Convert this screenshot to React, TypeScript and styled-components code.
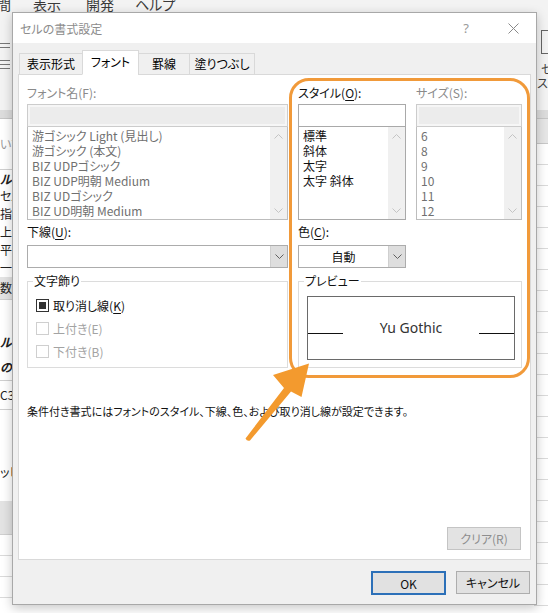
import React from 'react';
import styled, { createGlobalStyle } from 'styled-components';

const FONT = `"Noto Sans CJK JP", "Noto Sans", sans-serif`;

const GlobalStyle = createGlobalStyle`
  html, body { margin: 0; padding: 0; }
  body {
    width: 548px; height: 613px; overflow: hidden; background: #fff;
    font-family: ${FONT};
    font-feature-settings: "palt" 1;
  }
  #root { position: relative; width: 548px; height: 613px; overflow: hidden; }
`;

/* ---------------- Excel window behind ---------------- */
const Backdrop = styled.div`
  position: absolute;
  inset: 0;
  display: flex;
  flex-direction: column;
  background: #fff;
`;
const MenuBar = styled.div`
  height: 12px;
  flex: none;
  background: #f3f3f3;
  overflow: hidden;
  display: flex;
`;
const MenuItem = styled.span<{ $w: number; $shift?: number }>`
  flex: none;
  width: ${p => p.$w}px;
  margin-left: ${p => p.$shift ?? 0}px;
  margin-top: -6px;
  font-size: 14px;
  line-height: 20px;
  color: #3a3a3a;
  white-space: nowrap;
`;
const Ribbon = styled.div`
  height: 98px;
  flex: none;
  background: #f3f3f3;
  display: flex;
  justify-content: space-between;
`;
const RibbonLeft = styled.div`
  display: flex;
  flex-direction: column;
  gap: 12px;
  padding-top: 31px;
`;
const LinesIcon = styled.div`
  width: 10px;
  display: flex;
  flex-direction: column;
  gap: 3px;
  & > i {
    display: block;
    height: 1px;
    background: #777;
  }
`;
const RibbonRight = styled.div`
  width: 10px;
  display: flex;
  flex-direction: column;
  align-items: flex-end;
  padding-top: 18px;
  font-size: 12px;
  line-height: 14px;
  color: #444;
  white-space: nowrap;
`;
const RibbonBox = styled.div`
  width: 6px;
  height: 22px;
  border: 1px solid #666;
  border-right: none;
  margin-bottom: 8px;
`;
const RibbonText = styled.div<{ $ml: number }>`
  align-self: flex-start;
  margin-left: ${p => p.$ml}px;
`;
const HeaderBand = styled.div`
  height: 8px;
  flex: none;
  background: #dcdcdc;
  border-bottom: 1px solid #c6c6c6;
`;
const SheetArea = styled.div`
  flex: 1;
  display: flex;
  justify-content: space-between;
`;
const SidePane = styled.div`
  width: 60px;
  display: flex;
  flex-direction: column;
  font-size: 12px;
  color: #222;
  background: #fff;
`;
const PaneRow = styled.div<{ $h: number; $gray?: boolean; $bold?: boolean; $line?: boolean; $faded?: boolean }>`
  height: ${p => p.$h}px;
  line-height: ${p => p.$h}px;
  flex: none;
  white-space: nowrap;
  background: ${p => (p.$gray ? '#e3e3e3' : 'transparent')};
  font-weight: ${p => (p.$bold ? 700 : 400)};
  font-style: ${p => (p.$bold ? 'italic' : 'normal')};
  color: ${p => (p.$faded ? '#9a9a9a' : '#222')};
  border-bottom: ${p => (p.$line ? '1px solid #cfcfcf' : 'none')};
`;
const PaneGrid = styled.div`
  flex: 1;
  background: repeating-linear-gradient(to bottom, #fff 0, #fff 20px, #dadada 20px, #dadada 21px);
`;
const RightGrid = styled.div`
  width: 14px;
  display: flex;
  flex-direction: column;
`;
const ColHeader = styled.div`
  height: 24px;
  flex: none;
  background: #e6e6e6;
  border-bottom: 1px solid #c8c8c8;
`;
const GridRows = styled.div`
  flex: 1;
  background: repeating-linear-gradient(to bottom, #fff 0, #fff 20px, #dadada 20px, #dadada 21px);
`;

/* ---------------- Dialog ---------------- */
const Dialog = styled.div`
  position: absolute;
  left: 12px;
  top: 12px;
  width: 525px;
  height: 593px;
  box-sizing: border-box;
  background: #f0f0f0;
  border: 1px solid #a8a8a8;
  box-shadow: 0 3px 10px rgba(0, 0, 0, 0.22);
  display: flex;
  flex-direction: column;
  color: #000;
`;
const TitleBar = styled.div`
  height: 30px;
  flex: none;
  background: #fff;
  display: flex;
  align-items: center;
`;
const Title = styled.div`
  flex: 1;
  padding-left: 7px;
  font-size: 12px;
  color: #8c8c8c;
`;
const TitleButton = styled.div<{ $w: number }>`
  width: ${p => p.$w}px;
  height: 30px;
  display: flex;
  align-items: center;
  justify-content: center;
  color: #9a9a9a;
  font-size: 13px;
  font-family: "Noto Sans", sans-serif;
`;
const Body = styled.div`
  flex: 1;
  display: flex;
  flex-direction: column;
  padding: 7px 5px 0 5px;
`;
const TabRow = styled.div`
  display: flex;
  align-items: flex-end;
  height: 25px;
  padding-left: 2px;
  margin-bottom: -1px;
  position: relative;
  z-index: 1;
`;
const Tab = styled.div<{ $w: number; $active?: boolean }>`
  width: ${p => p.$w}px;
  height: ${p => (p.$active ? 25 : 22)}px;
  box-sizing: border-box;
  border: 1px solid #d9d9d9;
  border-bottom: ${p => (p.$active ? '1px solid #fff' : '1px solid #d9d9d9')};
  margin-left: -1px;
  background: ${p => (p.$active ? '#fff' : '#f0f0f0')};
  display: flex;
  align-items: center;
  justify-content: center;
  font-size: 12px;
  line-height: 16px;
  padding-bottom: ${p => (p.$active ? 1 : 0)}px;
`;
const Panel = styled.div`
  height: 486px;
  flex: none;
  box-sizing: border-box;
  background: #fff;
  border: 1px solid #d9d9d9;
  padding: 10px 9px 9px 8px;
  display: flex;
  flex-direction: column;
`;
const Grid = styled.div`
  display: grid;
  grid-template-columns: 261px 108px 106px;
  grid-template-rows: 19px 120px 21px 28px 95px;
  column-gap: 10px;
  align-items: start;
`;
const Label = styled.div<{ $dim?: boolean }>`
  font-size: 12px;
  line-height: 16px;
  height: 16px;
  color: ${p => (p.$dim ? '#8a8a8a' : '#111')};
  white-space: nowrap;
  & u { text-decoration-thickness: 1px; text-underline-offset: 2px; }
`;
const FieldStack = styled.div`
  display: flex;
  flex-direction: column;
`;
const InputBox = styled.div<{ $disabled?: boolean }>`
  height: 23px;
  box-sizing: border-box;
  border: 1px solid ${p => (p.$disabled ? '#cccccc' : '#a9a9a9')};
  background: ${p => (p.$disabled ? '#ececec' : '#fff')};
  box-shadow: ${p => (p.$disabled ? 'inset 0 0 0 2px #f6f6f6' : 'none')};
`;
const ListBox = styled.div<{ $disabled?: boolean }>`
  height: 93px;
  box-sizing: border-box;
  border: 1px solid ${p => (p.$disabled ? '#bdbdbd' : '#a9a9a9')};
  border-top: none;
  background: #fff;
  display: flex;
`;
const ListItems = styled.div`
  flex: 1;
  padding: 1px 0 0 4px;
  display: flex;
  flex-direction: column;
  overflow: hidden;
`;
const ListItem = styled.div<{ $dim?: boolean }>`
  height: 15px;
  line-height: 15px;
  font-size: 12px;
  white-space: nowrap;
  color: ${p => (p.$dim ? '#707070' : '#111')};
`;
const ScrollBar = styled.div`
  width: 17px;
  flex: none;
  background: #f0f0f0;
  display: flex;
  flex-direction: column;
  justify-content: space-between;
  align-items: center;
  padding: 7px 0 6px;
`;
const Dropdown = styled.div`
  height: 23px;
  box-sizing: border-box;
  border: 1px solid #acacac;
  background: #fff;
  display: flex;
`;
const DropValue = styled.div`
  flex: 1;
  text-align: center;
  font-size: 12px;
  line-height: 21px;
  color: #111;
`;
const DropButton = styled.div`
  width: 16px;
  flex: none;
  background: #dedede;
  border-left: 1px solid #cfcfcf;
  display: flex;
  align-items: center;
  justify-content: center;
`;
const Group = styled.fieldset<{ $span?: boolean }>`
  grid-column: ${p => (p.$span ? '2 / 4' : 'auto')};
  margin: 0;
  min-width: 0;
  height: 95px;
  box-sizing: border-box;
  border: 1px solid #dcdcdc;
  padding: 0 6px 0 8px;
  display: flex;
  flex-direction: column;
`;
const Legend = styled.legend`
  margin-left: -3px;
  padding: 0 1px;
  font-size: 12px;
  line-height: 16px;
  color: #111;
`;
const CheckList = styled.div`
  display: flex;
  flex-direction: column;
  padding-top: 5px;
`;
const CheckRow = styled.div<{ $disabled?: boolean }>`
  height: 23px;
  display: flex;
  align-items: center;
  gap: 4px;
  font-size: 12px;
  color: ${p => (p.$disabled ? '#a3a3a3' : '#111')};
  & u { text-decoration-thickness: 1px; text-underline-offset: 2px; }
`;
const CheckBox = styled.span<{ $mixed?: boolean; $disabled?: boolean }>`
  width: 13px;
  height: 13px;
  box-sizing: border-box;
  border: 1px solid ${p => (p.$disabled ? '#cfcfcf' : '#333')};
  background: #fff;
  display: flex;
  align-items: center;
  justify-content: center;
  &::after {
    content: '';
    display: ${p => (p.$mixed ? 'block' : 'none')};
    width: 7px;
    height: 7px;
    background: #333;
  }
`;
const PreviewBox = styled.div`
  margin-top: 7px;
  height: 64px;
  box-sizing: border-box;
  border: 1px solid #6a6a6a;
  display: flex;
  align-items: center;
`;
const BaseLine = styled.div`
  width: 35px;
  height: 1px;
  flex: none;
  background: #111;
  margin-top: 10px;
`;
const PreviewText = styled.div`
  flex: 1;
  text-align: center;
  font-family: "Noto Sans", sans-serif;
  font-size: 14px;
  line-height: 18px;
  color: #333;
`;
const Description = styled.div`
  margin-top: 35px;
  font-size: 11px;
  line-height: 16px;
  color: #111;
  white-space: nowrap;
`;
const Button = styled.div<{ $w: number; $primary?: boolean; $disabled?: boolean }>`
  width: ${p => p.$w}px;
  height: ${p => (p.$primary ? 24 : 23)}px;
  box-sizing: border-box;
  border: ${p => (p.$primary ? '2px solid #2c70b8' : p.$disabled ? '1px solid #c4c4c4' : '1px solid #adadad')};
  background: ${p => (p.$disabled ? '#e3e3e3' : '#e1e1e1')};
  color: ${p => (p.$disabled ? '#8e8e8e' : '#111')};
  display: flex;
  align-items: center;
  justify-content: center;
  font-size: 12px;
`;
const ClearRow = styled.div`
  margin-top: auto;
  display: flex;
  justify-content: flex-end;
`;
const ButtonRow = styled.div`
  display: flex;
  justify-content: flex-end;
  gap: 10px;
  margin-top: 11px;
  padding-right: 1px;
`;

/* ---------------- annotations ---------------- */
const Highlight = styled.div`
  position: absolute;
  left: 289px;
  top: 78px;
  width: 241px;
  height: 300px;
  box-sizing: border-box;
  border: 3px solid #f19a3a;
  border-radius: 20px;
  pointer-events: none;
`;
const ArrowSvg = styled.svg`
  position: absolute;
  left: 0;
  top: 0;
  pointer-events: none;
`;

const Chevron = ({ dir, color }: { dir: 'up' | 'down'; color: string }) => (
  <svg width="9" height="5" viewBox="0 0 9 5">
    <polyline
      points={dir === 'up' ? '0.5,4.5 4.5,0.5 8.5,4.5' : '0.5,0.5 4.5,4.5 8.5,0.5'}
      fill="none"
      stroke={color}
      strokeWidth="1"
    />
  </svg>
);

const fonts = [
  '游ゴシック Light (見出し)',
  '游ゴシック (本文)',
  'BIZ UDPゴシック',
  'BIZ UDP明朝 Medium',
  'BIZ UDゴシック',
  'BIZ UD明朝 Medium',
];
const styles = ['標準', '斜体', '太字', '太字 斜体'];
const sizes = ['6', '8', '9', '10', '11', '12'];

const paneRows: { t: string; h: number; gray?: boolean; bold?: boolean; line?: boolean; faded?: boolean }[] = [
  { t: 'い言', h: 50, faded: true, line: true },
  { t: 'ルの', h: 17, bold: true },
  { t: 'セル', h: 18 },
  { t: '指定', h: 18 },
  { t: '上付', h: 18 },
  { t: '平均', h: 18 },
  { t: '一括', h: 18 },
  { t: '数式', h: 22, gray: true, line: true },
  { t: '', h: 30 },
  { t: 'ルの', h: 24, bold: true },
  { t: 'の書', h: 26, bold: true, line: true },
  { t: 'C3', h: 28, line: true },
  { t: '', h: 50 },
  { t: 'ッピ', h: 24 },
  { t: '', h: 17 },
  { t: '', h: 33, gray: true, line: true },
];

export default function App() {
  return (
    <>
      <GlobalStyle />
      <Backdrop>
        <MenuBar>
          <MenuItem $w={36} $shift={-3}>間</MenuItem>
          <MenuItem $w={53}>表示</MenuItem>
          <MenuItem $w={49}>開発</MenuItem>
          <MenuItem $w={60}>ヘルプ</MenuItem>
        </MenuBar>
        <Ribbon>
          <RibbonLeft>
            <LinesIcon><i /><i /></LinesIcon>
            <LinesIcon><i /><i /><i /></LinesIcon>
          </RibbonLeft>
          <RibbonRight>
            <RibbonBox />
            <RibbonText $ml={3}>セ</RibbonText>
            <RibbonText $ml={-1}>スタ</RibbonText>
          </RibbonRight>
        </Ribbon>
        <HeaderBand />
        <SheetArea>
          <SidePane>
            {paneRows.map((r, i) => (
              <PaneRow key={i} $h={r.h} $gray={r.gray} $bold={r.bold} $line={r.line} $faded={r.faded}>
                {r.t}
              </PaneRow>
            ))}
            <PaneGrid />
          </SidePane>
          <RightGrid>
            <ColHeader />
            <GridRows />
          </RightGrid>
        </SheetArea>
      </Backdrop>

      <Dialog>
        <TitleBar>
          <Title>セルの書式設定</Title>
          <TitleButton $w={48}>?</TitleButton>
          <TitleButton $w={46}>
            <svg width="11" height="11" viewBox="0 0 11 11">
              <path d="M0.5 0.5 L10.5 10.5 M10.5 0.5 L0.5 10.5" stroke="#8a8a8a" strokeWidth="1" />
            </svg>
          </TitleButton>
        </TitleBar>
        <Body>
          <TabRow>
            <Tab $w={64}>表示形式</Tab>
            <Tab $w={57} $active>フォント</Tab>
            <Tab $w={52}>罫線</Tab>
            <Tab $w={66}>塗りつぶし</Tab>
          </TabRow>
          <Panel>
            <Grid>
              <Label $dim>フォント名(F):</Label>
              <Label>スタイル(<u>O</u>):</Label>
              <Label $dim>サイズ(S):</Label>

              <FieldStack>
                <InputBox $disabled />
                <ListBox $disabled>
                  <ListItems>
                    {fonts.map(f => (
                      <ListItem key={f} $dim>{f}</ListItem>
                    ))}
                  </ListItems>
                  <ScrollBar>
                    <Chevron dir="up" color="#c4c4c4" />
                    <Chevron dir="down" color="#c4c4c4" />
                  </ScrollBar>
                </ListBox>
              </FieldStack>
              <FieldStack>
                <InputBox />
                <ListBox>
                  <ListItems>
                    {styles.map(s => (
                      <ListItem key={s}>{s}</ListItem>
                    ))}
                  </ListItems>
                  <ScrollBar>
                    <Chevron dir="up" color="#c4c4c4" />
                    <Chevron dir="down" color="#c4c4c4" />
                  </ScrollBar>
                </ListBox>
              </FieldStack>
              <FieldStack>
                <InputBox $disabled />
                <ListBox $disabled>
                  <ListItems>
                    {sizes.map(s => (
                      <ListItem key={s} $dim>{s}</ListItem>
                    ))}
                  </ListItems>
                  <ScrollBar>
                    <Chevron dir="up" color="#c4c4c4" />
                    <Chevron dir="down" color="#c4c4c4" />
                  </ScrollBar>
                </ListBox>
              </FieldStack>

              <Label>下線(<u>U</u>):</Label>
              <Label>色(<u>C</u>):</Label>
              <div />

              <Dropdown>
                <DropValue />
                <DropButton><Chevron dir="down" color="#606060" /></DropButton>
              </Dropdown>
              <Dropdown>
                <DropValue>自動</DropValue>
                <DropButton><Chevron dir="down" color="#606060" /></DropButton>
              </Dropdown>
              <div />

              <Group>
                <Legend>文字飾り</Legend>
                <CheckList>
                  <CheckRow>
                    <CheckBox $mixed />
                    <span>取り消し線(<u>K</u>)</span>
                  </CheckRow>
                  <CheckRow $disabled>
                    <CheckBox $disabled />
                    <span>上付き(E)</span>
                  </CheckRow>
                  <CheckRow $disabled>
                    <CheckBox $disabled />
                    <span>下付き(B)</span>
                  </CheckRow>
                </CheckList>
              </Group>
              <Group $span>
                <Legend>プレビュー</Legend>
                <PreviewBox>
                  <BaseLine />
                  <PreviewText>Yu Gothic</PreviewText>
                  <BaseLine />
                </PreviewBox>
              </Group>
            </Grid>
            <Description>条件付き書式にはフォントのスタイル、下線、色、および取り消し線が設定できます。</Description>
            <ClearRow>
              <Button $w={74} $disabled>クリア(R)</Button>
            </ClearRow>
          </Panel>
          <ButtonRow>
            <Button $w={75} $primary>OK</Button>
            <Button $w={74}>キャンセル</Button>
          </ButtonRow>
        </Body>
      </Dialog>

      <Highlight />
      <ArrowSvg width="548" height="613" viewBox="0 0 548 613">
        <path
          d="M245.5 438.5 L284 388 L273 375 L309 363.5 L301.5 397 L291 391.5 L250 440.5 Q247 441.5 245.5 438.5 Z"
          fill="#f39a2e"
        />
      </ArrowSvg>
    </>
  );
}
